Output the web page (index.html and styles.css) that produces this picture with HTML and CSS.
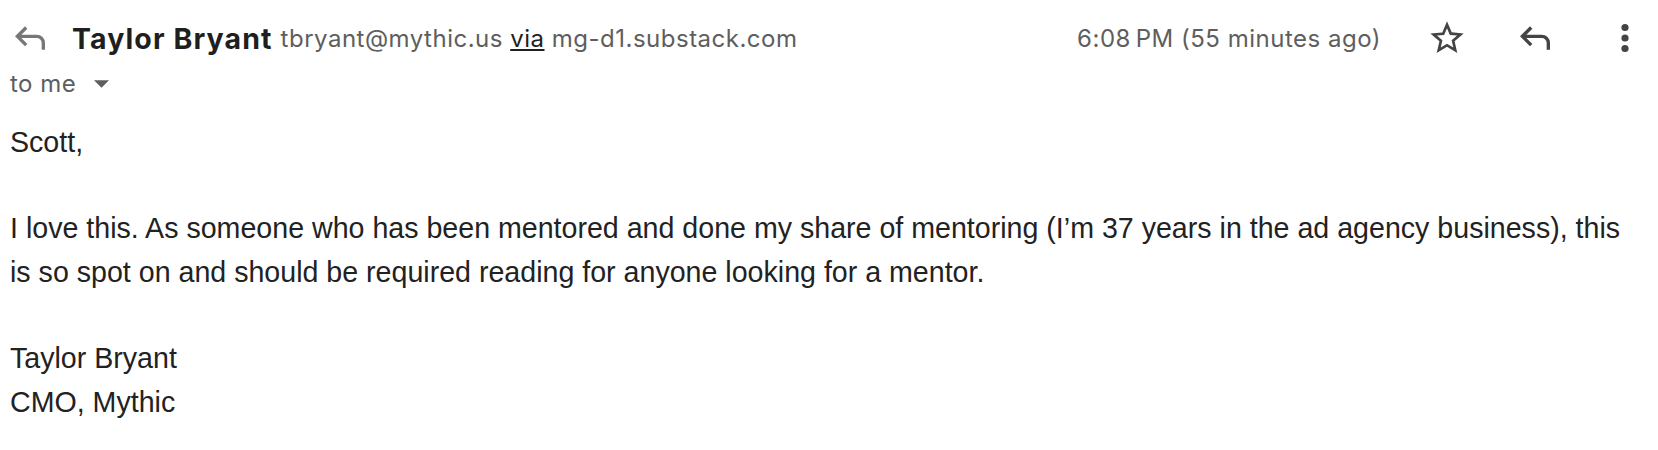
FILE: index.html
```html
<!DOCTYPE html>
<html>
<head>
<meta charset="utf-8">
<link rel="stylesheet" href="styles.css">
</head>
<body>
<div class="msg">
  <div class="head">
    <svg class="ico back" viewBox="0 -960 960 960"><path d="M760-200v-160q0-50-35-85t-85-35H273l144 144-57 56-240-240 240-240 57 56-144 144h367q83 0 141.5 58.5T840-360v160h-80Z"/></svg>
    <span class="name">Taylor Bryant</span>
    <span class="addr">tbryant@mythic.us <span class="via">via</span> mg-d1.substack.com</span>
    <span class="spacer"></span>
    <span class="time">6:08&#8239;PM (55 minutes ago)</span>
    <svg class="ico star" viewBox="0 0 24 24"><path d="M22 9.24l-7.19-.62L12 2 9.19 8.63 2 9.24l5.46 4.730L5.82 21 12 17.27 18.18 21l-1.63-7.03L22 9.24zM12 15.4l-3.76 2.27 1-4.28-3.32-2.88 4.38-.38L12 6.1l1.71 4.04 4.38.38-3.32 2.88 1 4.28L12 15.4z"/></svg>
    <svg class="ico reply" viewBox="0 -960 960 960"><path d="M760-200v-160q0-50-35-85t-85-35H273l144 144-57 56-240-240 240-240 57 56-144 144h367q83 0 141.5 58.5T840-360v160h-80Z"/></svg>
    <svg class="ico more" viewBox="0 0 24 24"><circle cx="12" cy="5" r="2.4"/><circle cx="12" cy="12" r="2.4"/><circle cx="12" cy="19" r="2.4"/></svg>
  </div>
  <div class="to">to me <svg class="caret" viewBox="0 0 10 5"><path d="M0 0h10L5 5z"/></svg></div>
  <div class="body">
    <p>Scott,</p>
    <p>I love this. As someone who has been mentored and done my share of mentoring (I’m 37 years in the ad agency business), this is so spot on and should be required reading for anyone looking for a mentor.</p>
    <p>Taylor Bryant<br>CMO, Mythic</p>
  </div>
</div>
</body>
</html>
```

FILE: styles.css
```css
html, body {
  margin: 0;
  background: #fff;
}
.msg {
  padding: 18px 0 0 10px;
  width: 1644px;
}
.head {
  display: flex;
  align-items: center;
  height: 40px;
  font-family: Inter, Roboto, "Liberation Sans", sans-serif;
}
.ico {
  fill: #5f6368;
  flex: none;
}
.back {
  width: 40px;
  height: 40px;
  fill: #777;
  margin-right: 22px;
}
.name {
  font-weight: 700;
  font-size: 28.5px;
  letter-spacing: 1.1px;
  color: #1f1f1f;
  margin-right: 8px;
}
.addr {
  font-size: 24px;
  letter-spacing: 0.5px;
  color: #5e5e5e;
}
.via {
  color: #1f1f1f;
  text-decoration: underline;
}
.spacer {
  flex: 1;
}
.time {
  font-size: 24px;
  letter-spacing: 0.5px;
  color: #5e5e5e;
  margin-right: 46px;
}
.star {
  width: 40px;
  height: 40px;
  fill: #444;
  margin-right: 48px;
}
.reply {
  width: 40px;
  height: 40px;
  fill: #444;
  margin-right: 52px;
}
.more {
  width: 36px;
  height: 36px;
  fill: #444;
  margin-right: 11px;
}
.to {
  font-family: Inter, Roboto, "Liberation Sans", sans-serif;
  font-size: 24px;
  letter-spacing: 0.5px;
  color: #5e5e5e;
  margin-top: 11px;
  display: flex;
  align-items: center;
}
.caret {
  width: 15px;
  height: 8px;
  fill: #5e5e5e;
  margin-left: 18px;
}
.body {
  font-family: "Liberation Sans", Arial, sans-serif;
  font-size: 28.6px;
  line-height: 44px;
  color: #222;
  margin-top: 22px;
  padding-right: 20px;
}
.body p {
  margin: 0 0 42px 0;
}
```
